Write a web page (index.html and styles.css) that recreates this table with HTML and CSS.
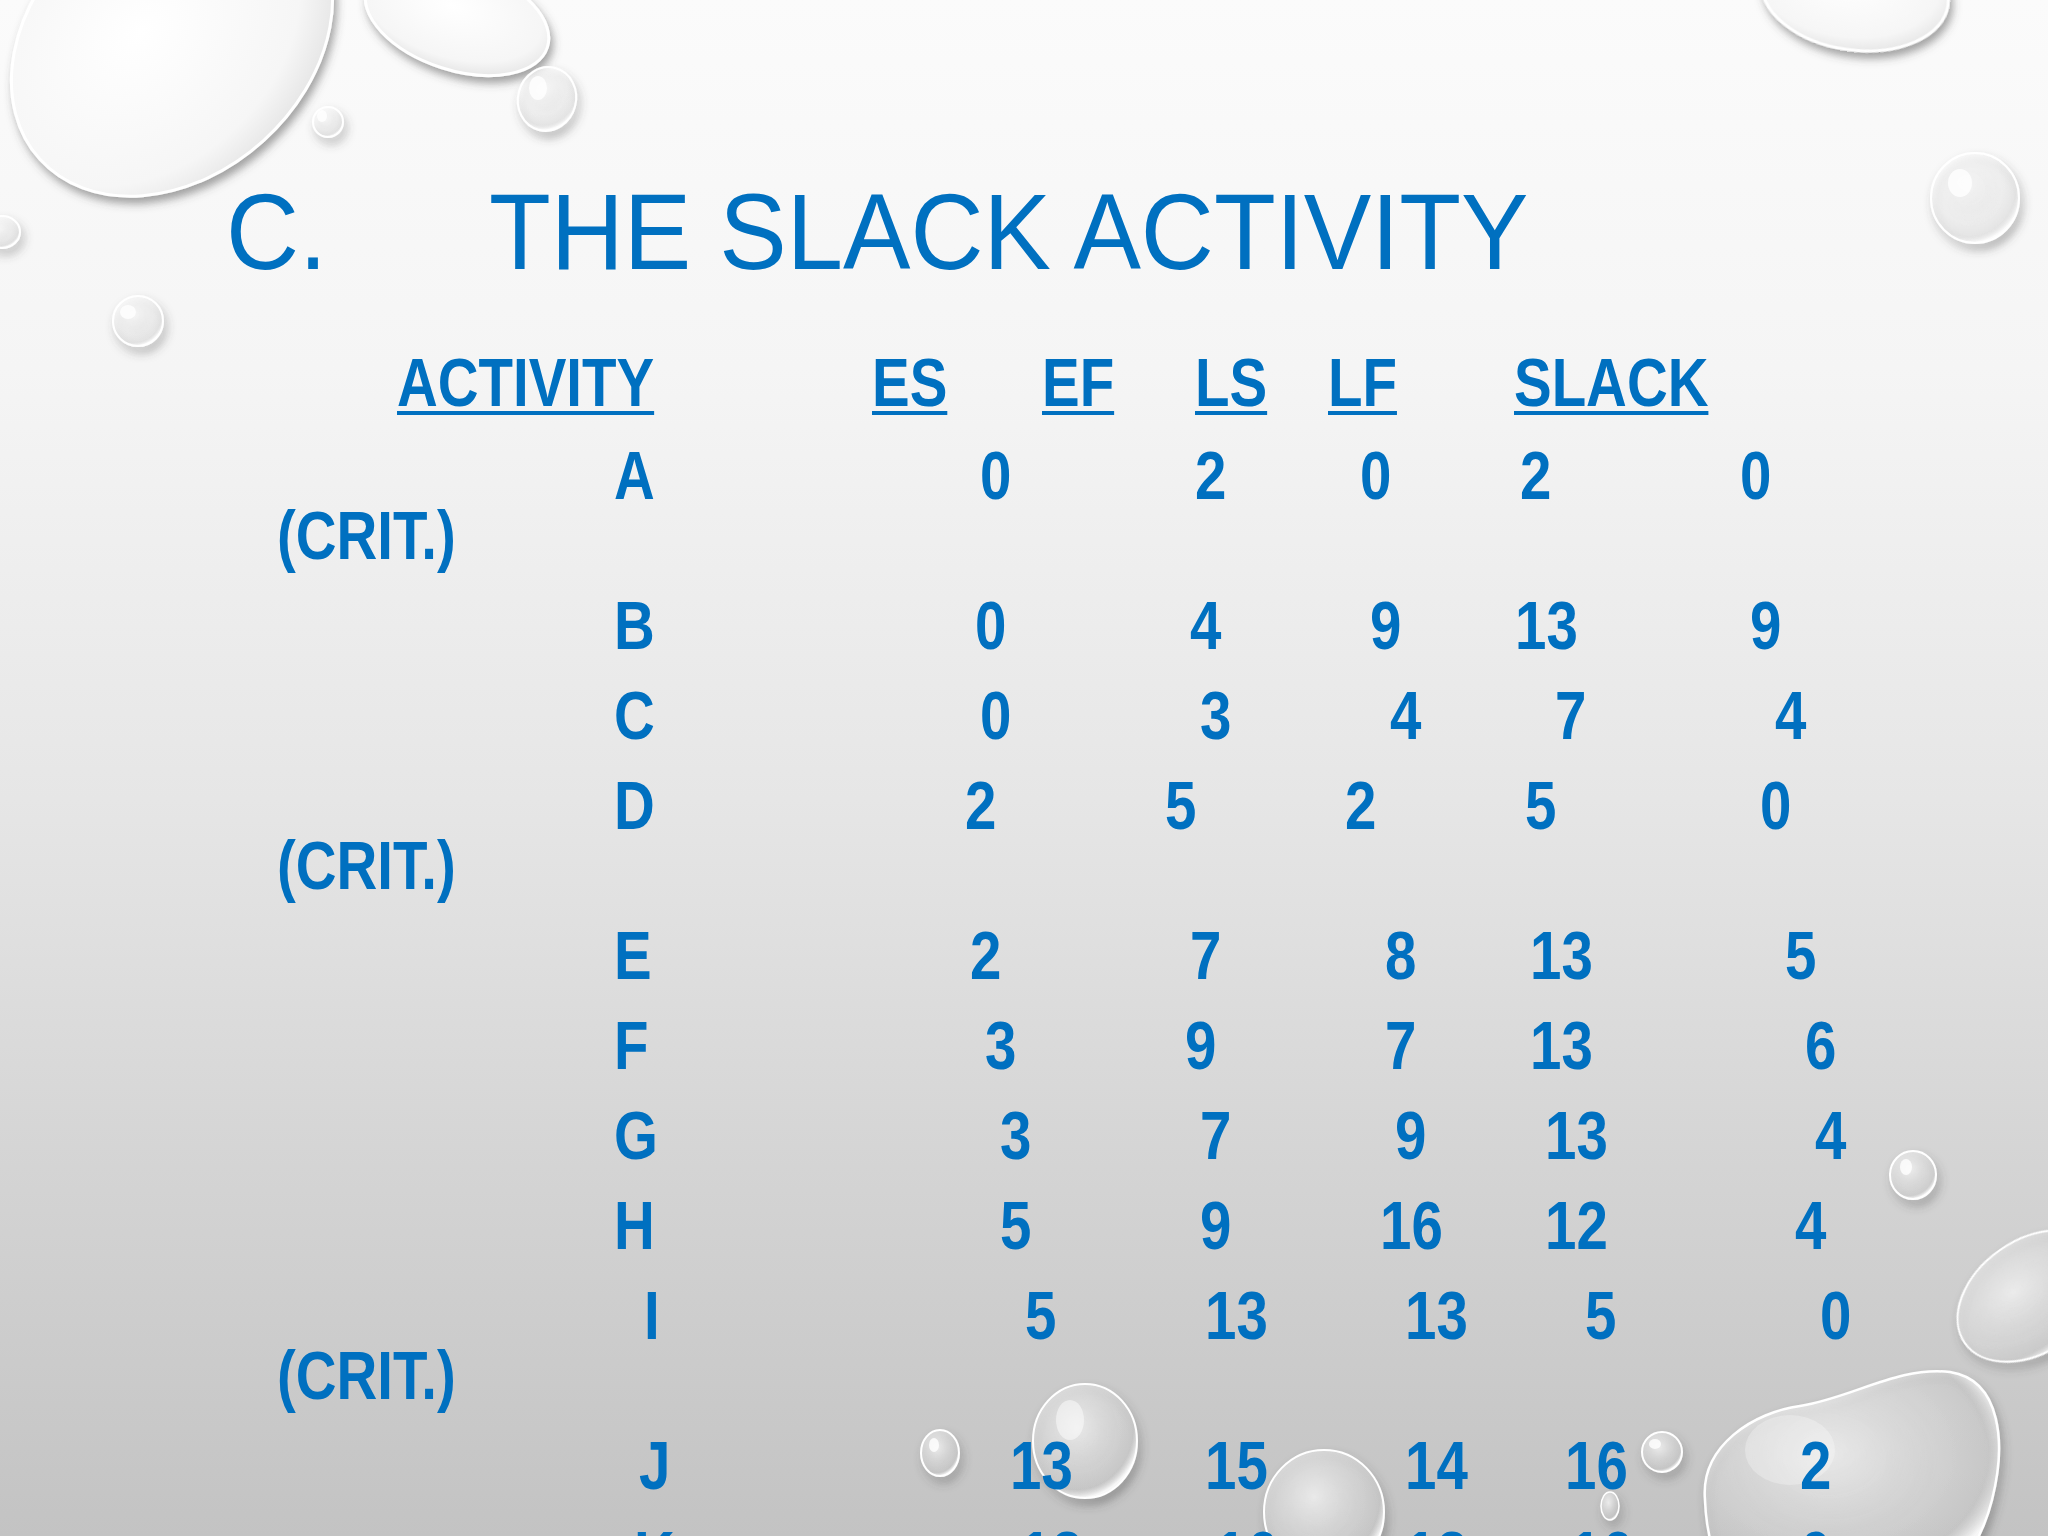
FILE: index.html
```html
<!DOCTYPE html>
<html lang="en">
<head>
<meta charset="utf-8">
<title>C. The Slack Activity</title>
<link rel="stylesheet" href="styles.css">
</head>
<body>
<div class="slide">
  <svg class="drops" width="2048" height="1536" viewBox="0 0 2048 1536" aria-hidden="true">
    <defs>
      <radialGradient id="dropFill" cx="0.42" cy="0.38" r="0.62">
        <stop offset="0" stop-color="#ffffff" stop-opacity="0.7"/>
        <stop offset="0.6" stop-color="#ffffff" stop-opacity="0.3"/>
        <stop offset="0.88" stop-color="#e0e0e0" stop-opacity="0.3"/>
        <stop offset="1" stop-color="#ffffff" stop-opacity="0.9"/>
      </radialGradient>
      <radialGradient id="dropFillWhite" cx="0.45" cy="0.4" r="0.62">
        <stop offset="0" stop-color="#ffffff" stop-opacity="1"/>
        <stop offset="0.8" stop-color="#f6f6f6" stop-opacity="1"/>
        <stop offset="1" stop-color="#e6e6e6" stop-opacity="1"/>
      </radialGradient>
      <filter id="shadow" x="-30%" y="-30%" width="160%" height="160%">
        <feDropShadow dx="3" dy="6" stdDeviation="4" flood-color="#4a4a4a" flood-opacity="0.5"/>
      </filter>
    </defs>
    <g filter="url(#shadow)">
      <ellipse cx="172" cy="40" rx="178" ry="136" transform="rotate(-42 172 40)" fill="url(#dropFillWhite)" stroke="#ffffff" stroke-width="3"/>
      <ellipse cx="457" cy="18" rx="95" ry="52" transform="rotate(18 457 18)" fill="url(#dropFillWhite)" stroke="#ffffff" stroke-width="3"/>
      <ellipse cx="547" cy="99" rx="29" ry="32" transform="rotate(15 547 99)" fill="url(#dropFill)" stroke="#ffffff" stroke-width="2"/>
      <circle cx="328" cy="122" r="15" fill="url(#dropFill)" stroke="#ffffff" stroke-width="2"/>
      <ellipse cx="2" cy="232" rx="18" ry="16" fill="url(#dropFill)" stroke="#ffffff" stroke-width="2"/>
      <circle cx="138" cy="321" r="25" fill="url(#dropFill)" stroke="#ffffff" stroke-width="2"/>
      <ellipse cx="1855" cy="-8" rx="94" ry="58" transform="rotate(8 1855 -8)" fill="url(#dropFillWhite)" stroke="#ffffff" stroke-width="3"/>
      <ellipse cx="1975" cy="198" rx="44" ry="45" fill="url(#dropFill)" stroke="#ffffff" stroke-width="2"/>
      <ellipse cx="1913" cy="1175" rx="23" ry="24" fill="url(#dropFill)" stroke="#ffffff" stroke-width="2"/>
      <ellipse cx="2032" cy="1296" rx="82" ry="56" transform="rotate(-35 2032 1296)" fill="url(#dropFill)" stroke="#ffffff" stroke-width="2"/>
      <ellipse cx="1085" cy="1441" rx="52" ry="57" fill="url(#dropFill)" stroke="#ffffff" stroke-width="2"/>
      <ellipse cx="940" cy="1453" rx="19" ry="23" fill="url(#dropFill)" stroke="#ffffff" stroke-width="2"/>
      <ellipse cx="1324" cy="1512" rx="60" ry="62" fill="url(#dropFill)" stroke="#ffffff" stroke-width="2"/>
      <circle cx="1662" cy="1452" r="20" fill="url(#dropFill)" stroke="#ffffff" stroke-width="2"/>
      <ellipse cx="1610" cy="1506" rx="9" ry="14" fill="url(#dropFill)" stroke="#ffffff" stroke-width="1.5"/>
      <path d="M1705,1500 C1700,1445 1755,1412 1800,1406 C1852,1398 1898,1366 1950,1372 C2002,1380 2006,1445 1992,1500 C1982,1540 1962,1566 1944,1590 L1730,1590 C1714,1562 1706,1530 1705,1500 Z" fill="url(#dropFill)" stroke="#ffffff" stroke-width="2.5"/>
    </g>
    <g fill="#ffffff" opacity="0.8">
      <ellipse cx="538" cy="88" rx="9" ry="12"/>
      <ellipse cx="322" cy="116" rx="5" ry="6"/>
      <ellipse cx="128" cy="312" rx="8" ry="7"/>
      <ellipse cx="1960" cy="183" rx="12" ry="14"/>
      <ellipse cx="1906" cy="1167" rx="6" ry="8"/>
      <ellipse cx="1070" cy="1420" rx="14" ry="20" opacity="0.6"/>
      <ellipse cx="934" cy="1445" rx="5" ry="7"/>
      <ellipse cx="1655" cy="1444" rx="6" ry="5"/>
      <ellipse cx="1790" cy="1450" rx="45" ry="35" opacity="0.35"/>
    </g>
  </svg>

  <h1 class="title"><span class="num">C.</span><span class="text">THE SLACK ACTIVITY</span></h1>

  <div class="table">
    <div class="head">
      <span class="h">ACTIVITY</span>
      <span class="h">ES</span>
      <span class="h">EF</span>
      <span class="h">LS</span>
      <span class="h">LF</span>
      <span class="h">SLACK</span>
    </div>

    <div class="row">
      <div class="cells"><span class="t">A</span><span class="t o20">0</span><span class="t o35">2</span><span class="t o20">0</span><span class="t o10">2</span><span class="t o0">0</span></div>
      <div class="crit"><span class="t">(CRIT.)</span></div>
    </div>
    <div class="row">
      <div class="cells"><span class="t">B</span><span class="t o15">0</span><span class="t o30">4</span><span class="t o30">9</span><span class="t o5">13</span><span class="t o10">9</span></div>
    </div>
    <div class="row">
      <div class="cells"><span class="t">C</span><span class="t o20">0</span><span class="t o40">3</span><span class="t o50">4</span><span class="t o45">7</span><span class="t o35">4</span></div>
    </div>
    <div class="row">
      <div class="cells"><span class="t">D</span><span class="t o5">2</span><span class="t o5">5</span><span class="t o5">2</span><span class="t o15">5</span><span class="t o20">0</span></div>
      <div class="crit"><span class="t">(CRIT.)</span></div>
    </div>
    <div class="row">
      <div class="cells"><span class="t">E</span><span class="t o10">2</span><span class="t o30">7</span><span class="t o45">8</span><span class="t o20">13</span><span class="t o45">5</span></div>
    </div>
    <div class="row">
      <div class="cells"><span class="t">F</span><span class="t o25">3</span><span class="t o25">9</span><span class="t o45">7</span><span class="t o20">13</span><span class="t o65">6</span></div>
    </div>
    <div class="row">
      <div class="cells"><span class="t">G</span><span class="t o40">3</span><span class="t o40">7</span><span class="t o55">9</span><span class="t o35">13</span><span class="t o75">4</span></div>
    </div>
    <div class="row">
      <div class="cells"><span class="t">H</span><span class="t o40">5</span><span class="t o40">9</span><span class="t o40">16</span><span class="t o35">12</span><span class="t o55">4</span></div>
    </div>
    <div class="row">
      <div class="cells"><span class="t o30">I</span><span class="t o65">5</span><span class="t o45">13</span><span class="t o65">13</span><span class="t o75">5</span><span class="t o80">0</span></div>
      <div class="crit"><span class="t">(CRIT.)</span></div>
    </div>
    <div class="row">
      <div class="cells"><span class="t o25">J</span><span class="t o50">13</span><span class="t o45">15</span><span class="t o65">14</span><span class="t o55">16</span><span class="t o60">2</span></div>
    </div>
    <div class="row">
      <div class="cells"><span class="t o20">K</span><span class="t o60">13</span><span class="t o55">16</span><span class="t o65">13</span><span class="t o60">16</span><span class="t o60">0</span></div>
    </div>
  </div>
</div>
</body>
</html>
```

FILE: styles.css
```css
html, body {
  margin: 0;
  padding: 0;
}

body {
  width: 2048px;
  height: 1536px;
  overflow: hidden;
  font-family: "Liberation Sans", Arial, sans-serif;
  color: #0070c0;
}

.slide {
  position: relative;
  width: 2048px;
  height: 1536px;
  overflow: hidden;
  background: linear-gradient(180deg, #fbfbfb 0%, #f5f5f5 24%, #e6e6e6 52%, #d4d4d4 76%, #c3c3c3 100%);
}

.drops {
  position: absolute;
  left: 0;
  top: 0;
}

.title {
  position: relative;
  margin: 0;
  padding: 179px 0 0 226px;
  font-family: "Liberation Sans", Arial, sans-serif;
  font-weight: 400;
  font-size: 107px;
  line-height: 107px;
  color: #0070c0;
  white-space: nowrap;
}

.title .num,
.title .text {
  display: inline-block;
  transform: scaleX(0.945);
  transform-origin: 0 50%;
}

.title .num {
  width: 263px;
}

.table {
  position: relative;
  margin-top: 66px;
  padding-left: 277px;
  font-family: "Liberation Sans", Arial, sans-serif;
  font-weight: 700;
  font-size: 68px;
  line-height: 60px;
}

.head {
  display: grid;
  grid-template-columns: 475px 170px 153px 133px 186px auto;
  padding-left: 120px;
  margin-bottom: 33px;
}

.h,
.t {
  display: inline-block;
  justify-self: start;
  white-space: nowrap;
  transform: scaleX(0.83);
  transform-origin: 0 50%;
}

.h {
  text-decoration: underline;
  text-decoration-thickness: 4px;
  text-underline-offset: 5px;
}

.row {
  margin-bottom: 30px;
}

.cells {
  display: grid;
  grid-template-columns: 346px 200px 180px 170px 230px auto;
  padding-left: 337px;
}

.o0 { margin-left: 0; }
.o5 { margin-left: 5px; }
.o10 { margin-left: 10px; }
.o15 { margin-left: 15px; }
.o20 { margin-left: 20px; }
.o25 { margin-left: 25px; }
.o30 { margin-left: 30px; }
.o35 { margin-left: 35px; }
.o40 { margin-left: 40px; }
.o45 { margin-left: 45px; }
.o50 { margin-left: 50px; }
.o55 { margin-left: 55px; }
.o60 { margin-left: 60px; }
.o65 { margin-left: 65px; }
.o75 { margin-left: 75px; }
.o80 { margin-left: 80px; }
```
